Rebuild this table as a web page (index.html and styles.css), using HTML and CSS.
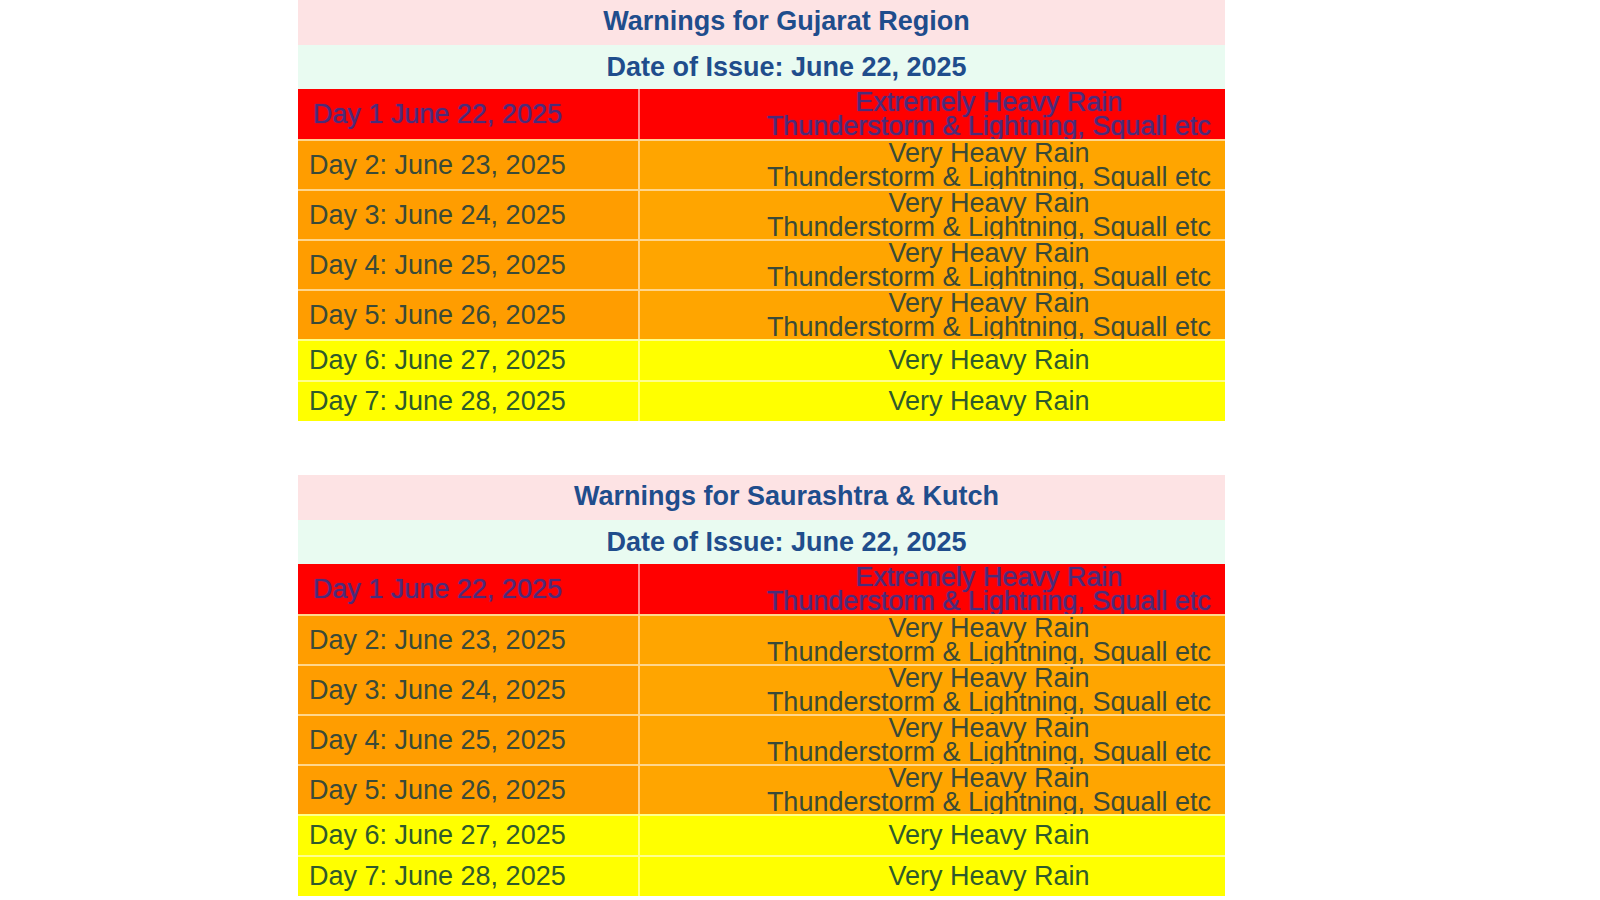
FILE: index.html
```html
<!DOCTYPE html>
<html lang="en">
<head>
<meta charset="utf-8">
<title>Warnings</title>
<link rel="stylesheet" href="styles.css">
</head>
<body>
<div class="page">
  <section class="warn">
    <div class="title">Warnings for Gujarat Region</div>
    <div class="issue">Date of Issue: June 22, 2025</div>
    <div class="row red two"><div class="day">Day 1 June 22, 2025</div><div class="desc">Extremely Heavy Rain<br>Thunderstorm &amp; Lightning, Squall etc</div></div>
    <div class="row orange two"><div class="day">Day 2: June 23, 2025</div><div class="desc">Very Heavy Rain<br>Thunderstorm &amp; Lightning, Squall etc</div></div>
    <div class="row orange two"><div class="day">Day 3: June 24, 2025</div><div class="desc">Very Heavy Rain<br>Thunderstorm &amp; Lightning, Squall etc</div></div>
    <div class="row orange two"><div class="day">Day 4: June 25, 2025</div><div class="desc">Very Heavy Rain<br>Thunderstorm &amp; Lightning, Squall etc</div></div>
    <div class="row orange two"><div class="day">Day 5: June 26, 2025</div><div class="desc">Very Heavy Rain<br>Thunderstorm &amp; Lightning, Squall etc</div></div>
    <div class="row yellow one"><div class="day">Day 6: June 27, 2025</div><div class="desc">Very Heavy Rain</div></div>
    <div class="row yellow one"><div class="day">Day 7: June 28, 2025</div><div class="desc">Very Heavy Rain</div></div>
  </section>
  <section class="warn">
    <div class="title">Warnings for Saurashtra &amp; Kutch</div>
    <div class="issue">Date of Issue: June 22, 2025</div>
    <div class="row red two"><div class="day">Day 1 June 22, 2025</div><div class="desc">Extremely Heavy Rain<br>Thunderstorm &amp; Lightning, Squall etc</div></div>
    <div class="row orange two"><div class="day">Day 2: June 23, 2025</div><div class="desc">Very Heavy Rain<br>Thunderstorm &amp; Lightning, Squall etc</div></div>
    <div class="row orange two"><div class="day">Day 3: June 24, 2025</div><div class="desc">Very Heavy Rain<br>Thunderstorm &amp; Lightning, Squall etc</div></div>
    <div class="row orange two"><div class="day">Day 4: June 25, 2025</div><div class="desc">Very Heavy Rain<br>Thunderstorm &amp; Lightning, Squall etc</div></div>
    <div class="row orange two"><div class="day">Day 5: June 26, 2025</div><div class="desc">Very Heavy Rain<br>Thunderstorm &amp; Lightning, Squall etc</div></div>
    <div class="row yellow one"><div class="day">Day 6: June 27, 2025</div><div class="desc">Very Heavy Rain</div></div>
    <div class="row yellow one"><div class="day">Day 7: June 28, 2025</div><div class="desc">Very Heavy Rain</div></div>
  </section>
</div>
</body>
</html>
```

FILE: styles.css
```css
* { box-sizing: border-box; }
html, body { margin: 0; padding: 0; background: #ffffff; }
body { font-family: "Liberation Sans", Arial, sans-serif; font-size: 27px; }

.page {
  width: 927px;
  margin-left: 298px;
  display: flex;
  flex-direction: column;
  gap: 54px;
}

.warn { display: flex; flex-direction: column; }

.title, .issue {
  font-weight: bold;
  color: #1f4d8c;
  text-align: center;
  padding-left: 50px;
  display: flex;
  align-items: center;
  justify-content: center;
}
.title { height: 45px; background: #fde3e4; padding-bottom: 2px; }
.issue { height: 44px; background: #e9fbf1; }

.row {
  display: flex;
  border-top: 2px solid rgba(255, 255, 255, 0.55);
}
.row.red { border-top: none; }
.row.two { height: 50px; }
.row.one { height: 41px; }

.day {
  width: 342px;
  flex: none;
  padding-left: 11px;
  border-right: 2px solid rgba(255, 255, 255, 0.55);
  display: flex;
  align-items: center;
  line-height: 25px;
}
.desc {
  flex: 1;
  padding-left: 113px;
  text-align: center;
  line-height: 24.5px;
  display: flex;
  flex-direction: column;
  justify-content: center;
  white-space: nowrap;
}

.red { background: #ff0000; color: #4a2c78; }
.red .day { padding-left: 15px; }
.red .day, .red .desc { text-shadow: 0 0 1.5px #6a2f8a; }
.orange { background: #ffa500; color: #3a4a38; }
.orange .day { background: #ff9d00; }
.yellow { background: #ffff00; color: #2f5a2c; }
```
